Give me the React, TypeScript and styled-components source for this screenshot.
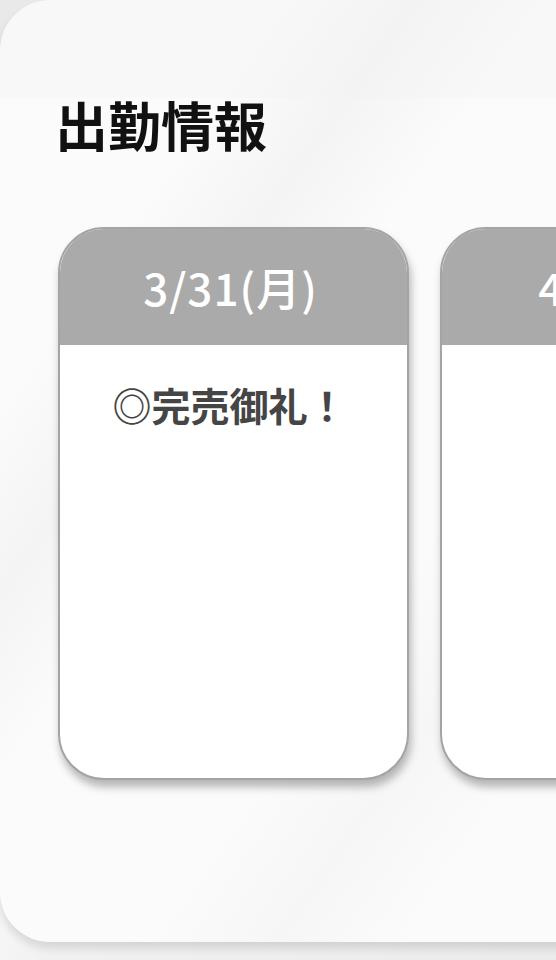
import React from "react";
import styled, { createGlobalStyle } from "styled-components";

const GlobalStyle = createGlobalStyle`
  html, body {
    margin: 0;
    padding: 0;
    background: #ececec;
  }
  body {
    font-family: "Noto Sans CJK JP", "Noto Sans", sans-serif;
  }
`;

const Page = styled.div`
  width: 556px;
  height: 960px;
  overflow: hidden;
  background:
    linear-gradient(120deg, rgba(255,255,255,0) 30%, rgba(255,255,255,0.7) 42%, rgba(255,255,255,0) 55%),
    linear-gradient(135deg, #e9e9e9 0%, #f3f3f3 50%, #ebebeb 100%);
`;

const Panel = styled.section`
  width: 640px;
  height: 942px;
  box-sizing: border-box;
  border-radius: 50px;
  padding: 86px 0 0 58px;
  background:
    linear-gradient(to bottom, rgba(242,242,242,0.35) 0, rgba(242,242,242,0.35) 98px, rgba(255,255,255,0) 98px),
    linear-gradient(125deg, rgba(255,255,255,0) 22%, rgba(241,241,241,0.7) 32%, rgba(255,255,255,0) 42%, rgba(255,255,255,0) 62%, rgba(243,243,243,0.6) 72%, rgba(255,255,255,0) 82%),
    #fbfbfb;
  box-shadow: 0 6px 10px rgba(0, 0, 0, 0.12);
`;

const Title = styled.h2`
  margin: 0;
  font-family: "Noto Sans CJK JP", sans-serif;
  font-weight: 700;
  font-size: 53px;
  line-height: 76px;
  color: #111;
  margin-left: -3px;
`;

const CardRow = styled.div`
  display: flex;
  gap: 31px;
  margin-top: 65px;
`;

const Card = styled.article`
  flex: none;
  width: 351px;
  height: 553px;
  box-sizing: border-box;
  border: 2px solid #a4a4a4;
  border-radius: 46px;
  overflow: hidden;
  background: #fff;
  box-shadow: 2px 7px 9px rgba(0, 0, 0, 0.28);
  display: flex;
  flex-direction: column;
`;

const CardHeader = styled.div`
  height: 116px;
  background: #aaaaaa;
  color: #fff;
  display: flex;
  align-items: center;
  justify-content: center;
  font-family: "Noto Sans CJK JP", sans-serif;
  font-weight: 500;
  font-size: 44px;
  letter-spacing: 1px;
  padding-top: 0;
  padding-right: 6px;
  box-sizing: border-box;
  white-space: nowrap;
`;

const CardBody = styled.div`
  padding-top: 34px;
  text-align: center;
  color: #454545;
  font-family: "Noto Sans CJK JP", sans-serif;
  font-weight: 700;
  font-size: 39px;
  line-height: 1.3;
  padding-right: 8px;
`;

const days = [
  { date: "3/31(月)", note: "◎完売御礼！" },
  { date: "4/1(火)", note: "" },
];

export default function App() {
  return (
    <>
      <GlobalStyle />
      <Page>
        <Panel>
          <Title>出勤情報</Title>
          <CardRow>
            {days.map((d) => (
              <Card key={d.date}>
                <CardHeader>{d.date}</CardHeader>
                <CardBody>{d.note}</CardBody>
              </Card>
            ))}
          </CardRow>
        </Panel>
      </Page>
    </>
  );
}
